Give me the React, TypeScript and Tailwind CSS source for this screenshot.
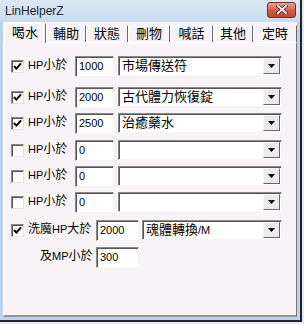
import React from "react";

const tabs = [
  { label: "喝水", w: 42 },
  { label: "輔助", w: 40 },
  { label: "狀態", w: 42 },
  { label: "刪物", w: 42 },
  { label: "喊話", w: 43 },
  { label: "其他", w: 40 },
  { label: "定時", w: 44 },
];

function Check({ checked }: { checked: boolean }) {
  return (
    <div className="w-[13px] h-[13px] shrink-0 bg-white border border-t-[#8a8a8a] border-l-[#8a8a8a] border-b-[#e2e2e2] border-r-[#e2e2e2] shadow-[inset_1px_1px_0_#555555] flex items-center justify-center">
      {checked && (
        <svg width="9" height="9" viewBox="0 0 9 9">
          <path d="M1 4 L3.4 6.6 L8 1.4" stroke="#000" strokeWidth="2" fill="none" />
        </svg>
      )}
    </div>
  );
}

function Latin({ children }: { children: React.ReactNode }) {
  return <span className="text-[11px] font-['Liberation_Sans',sans-serif]">{children}</span>;
}

function Field({ value, w }: { value: string; w: number }) {
  return (
    <div
      className="h-[21px] shrink-0 bg-white border border-t-[#8a8a8a] border-l-[#8a8a8a] border-b-[#f4f4f4] border-r-[#f4f4f4] shadow-[inset_1px_1px_0_#555555] flex items-center pl-[3px] text-[11px] text-black font-['Liberation_Sans',sans-serif]"
      style={{ width: w }}
    >
      {value}
    </div>
  );
}

function Combo({ value, w }: { value: React.ReactNode; w: number }) {
  return (
    <div
      className="h-[20px] shrink-0 bg-white border border-t-[#8a8a8a] border-l-[#8a8a8a] border-b-[#f4f4f4] border-r-[#f4f4f4] shadow-[inset_1px_1px_0_#555555] flex items-center justify-between pl-[3px] pr-[1px]"
      style={{ width: w }}
    >
      <span className="text-[13px] leading-[16px] text-black">{value}</span>
      <div className="w-[17px] h-[16px] bg-[#ece9ec] border border-t-[#f8f8f8] border-l-[#f8f8f8] border-b-[#666666] border-r-[#666666] flex items-center justify-center">
        <svg width="7" height="4" viewBox="0 0 7 4">
          <path d="M0 0 H7 L3.5 4 Z" fill="#000" />
        </svg>
      </div>
    </div>
  );
}

function HpRow({ checked, value, item, mt }: { checked: boolean; value: string; item: string; mt: string }) {
  return (
    <div className={`flex items-center h-[21px] ${mt}`}>
      <div className="ml-[7px]">
        <Check checked={checked} />
      </div>
      <div className="ml-[4px] w-[47px] text-[12px] leading-[16px] text-black pb-[3px]">
        <Latin>HP</Latin>小於
      </div>
      <Field value={value} w={39} />
      <div className="ml-[4px] -mt-[1px]">
        <Combo value={item} w={164} />
      </div>
    </div>
  );
}

export default function App() {
  return (
    <div className="w-[304px] h-[324px] bg-[#e8e8e8] font-['Liberation_Sans','Noto_Sans_CJK_TC',sans-serif]">
      <div className="w-[302px] h-[322px] border-r-2 border-b-2 border-[#1b2430] bg-[#bcd2ec] flex flex-col">
        {/* Title bar */}
        <div className="h-[22px] shrink-0 flex items-center justify-between pl-[5px] pr-[4px] bg-gradient-to-b from-[#dde8f5] to-[#c8dbef]">
          <span className="text-[12px] text-[#1e2530] font-['Liberation_Sans',sans-serif]">LinHelperZ</span>
          <div className="w-[29px] h-[16px] mt-[-3px] rounded-[3px] border border-[#7a2e22] bg-gradient-to-b from-[#e6a393] via-[#d0604c] to-[#c2432c] flex items-center justify-center">
            <svg width="12" height="9" viewBox="0 0 12 9">
              <path d="M2 1 L10 8 M10 1 L2 8" stroke="#4a1a12" strokeWidth="3.2" strokeLinecap="square" />
              <path d="M2 1 L10 8 M10 1 L2 8" stroke="#ffffff" strokeWidth="1.8" strokeLinecap="square" />
            </svg>
          </div>
        </div>

        {/* Client */}
        <div className="ml-[3px] w-[294px] h-[295px] bg-[#f7f3f6] flex flex-col">
          {/* Tabs */}
          <div className="h-[20px] shrink-0 flex items-end pl-[1px] bg-[#f7f3f6]">
            {tabs.map((t, i) =>
              i === 0 ? (
                <div
                  key={t.label}
                  className="h-[20px] relative z-10 -mb-[1px] bg-[#f7f3f6] border-t border-l border-white border-r border-r-[#6b6b6b] rounded-tl-[2px] flex items-center justify-center text-[13px] leading-[16px] text-black pb-[1px]"
                  style={{ width: t.w }}
                >
                  {t.label}
                </div>
              ) : (
                <div
                  key={t.label}
                  className="h-[17px] bg-[#f7f3f6] border-t border-l border-white border-r border-r-[#6b6b6b] flex items-center justify-center text-[13px] leading-[16px] text-black"
                  style={{ width: t.w }}
                >
                  {t.label}
                </div>
              )
            )}
          </div>

          {/* Page */}
          <div className="h-[275px] shrink-0 border-t border-l border-white border-r border-r-[#777777] border-b-2 border-b-[#999499] pt-[13px] flex flex-col">
            <HpRow checked value="1000" item="市場傳送符" mt="" />
            <HpRow checked value="2000" item="古代體力恢復錠" mt="mt-[10px]" />
            <HpRow checked value="2500" item="治癒藥水" mt="mt-[5px]" />
            <HpRow checked={false} value="0" item="" mt="mt-[6px]" />
            <HpRow checked={false} value="0" item="" mt="mt-[5px]" />
            <HpRow checked={false} value="0" item="" mt="mt-[5px]" />

            <div className="flex items-center h-[21px] mt-[7px]">
              <div className="ml-[7px]">
                <Check checked />
              </div>
              <div className="ml-[4px] w-[68px] text-[12px] leading-[16px] text-black pb-[3px]">
                洗魔<Latin>HP</Latin>大於
              </div>
              <Field value="2000" w={43} />
              <div className="ml-[3px] -mt-[1px]">
                <Combo
                  value={
                    <>
                      魂體轉換<Latin>/M</Latin>
                    </>
                  }
                  w={140}
                />
              </div>
            </div>

            <div className="flex items-center h-[21px] mt-[6px]">
              <div className="ml-[36px] w-[56px] text-[12px] leading-[16px] text-black pb-[3px]">
                及<Latin>MP</Latin>小於
              </div>
              <Field value="300" w={43} />
            </div>
          </div>
        </div>
      </div>
    </div>
  );
}
